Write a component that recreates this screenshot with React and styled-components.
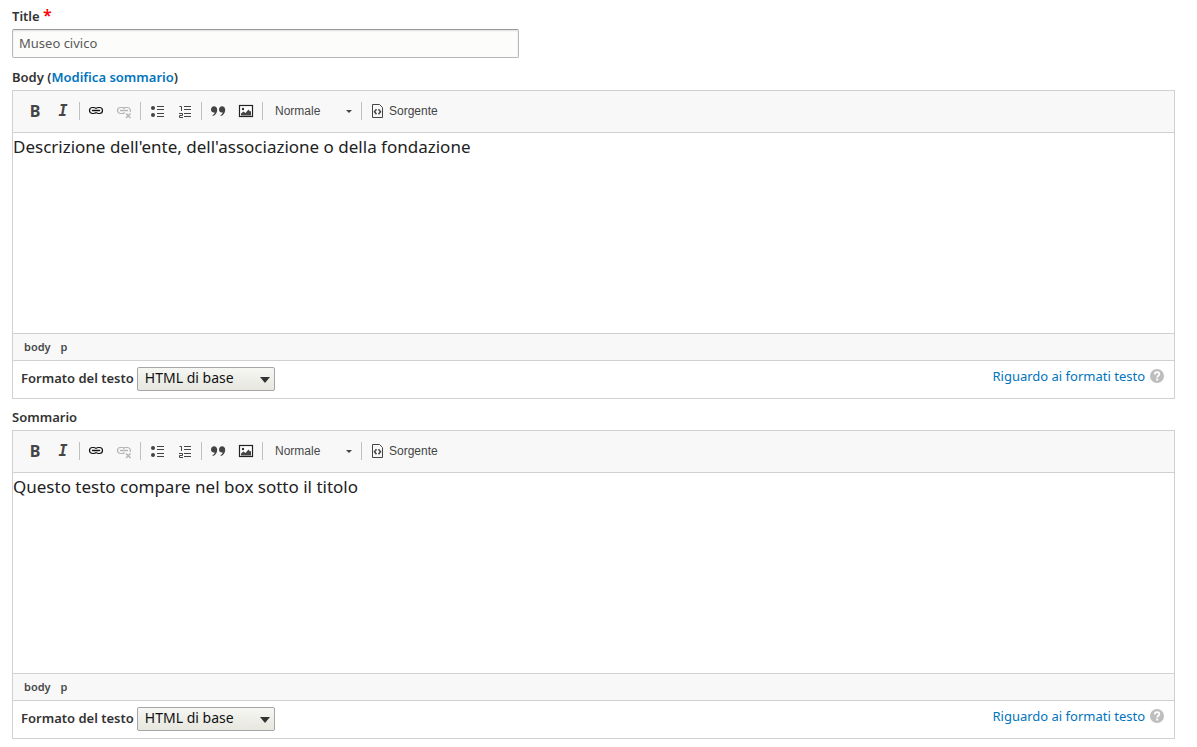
import React, { useState } from 'react'
import styled, { createGlobalStyle } from 'styled-components'


const GlobalStyle = createGlobalStyle`
  *, *::before, *::after {
    box-sizing: border-box;
  }

  body {
    margin: 0;
    background: #fff;
    color: #333;
    font-family: 'Noto Sans', 'Open Sans', sans-serif;
    font-size: 13px;
  }
`

const Icon = styled.svg.attrs({ 'aria-hidden': true, viewBox: '0 0 16 16' })`
  display: block;
  flex-shrink: 0;
  width: 16px;
  height: 16px;
  fill: none;
  stroke: ${props => props.$color || '#444'};
`

const BulletListIcon = () => (
  <Icon>
    <circle cx='4' cy='5' r='2' fill='#444' stroke='none' />
    <circle cx='4' cy='12' r='2' fill='#444' stroke='none' />
    <path d='M8 3.5h7M8 6.5h7M8 10.5h7M8 13.5h7' />
  </Icon>
)

const NumberedListIcon = () => (
  <Icon>
    <path d='M2.5 3.5h2V8' />
    <path d='M2 10.5h3.5v2h-3v2H6' />
    <path d='M7 3.5h7M7 6.5h7M7 10.5h7M7 13.5h7' />
  </Icon>
)

const LinkIcon = () => (
  <Icon $color='#111'>
    <rect x='1.5' y='4.5' width='7' height='6' rx='3' strokeWidth='1.2' />
    <rect x='7.5' y='4.5' width='7' height='6' rx='3' strokeWidth='1.2' />
    <path d='M5 7.5h6' stroke='#f8f8f8' strokeWidth='3.4' />
    <path d='M4.500 7.500h7' strokeWidth='1.400' strokeLinecap='round' />
  </Icon>
)

const UnlinkIcon = () => (
  <Icon $color='#b5b5b5'>
    <path d='M8.5 9.500c-.6.700-1.200 1-2 1h-2a3 3 0 0 1 0-6h2c.8 0 1.500.4 2 1' strokeWidth='1.2' />
    <path d='M7.500 5.500c.5-.6 1.200-1 2-1h2a3 3 0 0 1 2.500 4.500' strokeWidth='1.2' />
    <path d='M4.500 7.500h7' strokeWidth='1.400' strokeLinecap='round' />
    <path d='M10 10.500l4.500 4.500M14.500 10.500L10 15' strokeWidth='1.500' />
  </Icon>
)

const quoteMark = 'M4 3.3c1.9 0 3.2 1.4 3.2 3.6 0 3-1.8 5.2-4.3 6l-.5-.8c1.4-.7 2.2-1.6 2.3-2.7-.3.1-.6.1-.9.1C2.2 9.5 1 8.2 1 6.5S2.3 3.3 4 3.3z'

const QuoteIcon = () => (
  <Icon $color='none'>
    <path d={quoteMark} fill='#444' />
    <path d={quoteMark} fill='#444' transform='translate(8 0)' />
  </Icon>
)

const ImageIcon = () => (
  <Icon $color='#222'>
    <rect x='1.5' y='2.5' width='13' height='11' fill='#fff' strokeWidth='1.2' />
    <circle cx='5' cy='6' r='1.2' fill='#333' stroke='none' />
    <path d='M3 12.5v-2l2.5-2 2 1.5 3-3.5 1.5 2 1-.5v4.5z' fill='#444' stroke='none' />
  </Icon>
)

const SourceIcon = () => (
  <Icon>
    <path d='M3.5 1.5h7l3 3v10h-10z' />
    <path d='M7.5 6.2l-2 2.5 2 2.5M9.5 6.2l2 2.5-2 2.5' strokeWidth='1.5' />
  </Icon>
)

const HelpIcon = () => (
  <svg width='14' height='14' viewBox='0 0 14 14' aria-hidden='true'>
    <circle cx='7' cy='7' r='7' fill='#bebebe' />
    <path d='M4.8 5.4c0-1.4 1-2.2 2.3-2.2s2.2.8 2.2 1.9c0 1.6-2.1 1.6-2.1 3.3' fill='none' stroke='#fff' strokeWidth='1.8' />
    <rect x='6.2' y='9.5' width='2' height='2' fill='#fff' />
  </svg>
)

const ToolbarContainer = styled.div`
  display: flex;
  flex-direction: row;
  align-items: center;
  height: 42px;
  padding: 0 8px 2px;
  background: #f8f8f8;
  border-bottom: 1px solid #d1d1d1;
`

const ToolbarButton = styled.button`
  display: flex;
  align-items: center;
  justify-content: center;
  flex-shrink: 0;
  width: 28px;
  height: 28px;
  padding: 0;
  border: 0;
  background: transparent;
  color: #444;
  cursor: pointer;

  &:hover:enabled {
    background: #e5e5e5;
  }
`

const SourceButton = styled(ToolbarButton)`
  width: auto;
  gap: 4px;
  padding: 0 5px;
  font: 12px 'Liberation Sans', Arial, sans-serif;
`

const BoldGlyph = styled.span`
  font: bold 16px/16px 'Noto Sans', sans-serif;
`

const ItalicGlyph = styled.span`
  font: italic bold 15px/16px 'DejaVu Sans Mono', monospace;
`

const Separator = styled.span`
  flex-shrink: 0;
  width: 1px;
  height: 18px;
  margin: 0 2px;
  background: #c0c0c0;
`

const SelectWrapper = styled.span`
  position: relative;
  display: flex;
  width: ${props => props.$width}px;
`

const StyleSelect = styled.select`
  appearance: none;
  width: 100%;
  height: 28px;
  padding: 0 20px 0 10px;
  border: 0;
  background: transparent;
  color: #484848;
  font: 12px 'Liberation Sans', Arial, sans-serif;
`

const StyleArrow = styled.svg`
  position: absolute;
  top: 13px;
  right: 7px;
  pointer-events: none;
`

const Toolbar = () => (
  <ToolbarContainer role='toolbar'>
    <ToolbarButton type='button' aria-label='Grassetto'><BoldGlyph>B</BoldGlyph></ToolbarButton>
    <ToolbarButton type='button' aria-label='Corsivo'><ItalicGlyph>I</ItalicGlyph></ToolbarButton>
    <Separator />
    <ToolbarButton type='button' aria-label='Collegamento'><LinkIcon /></ToolbarButton>
    <ToolbarButton type='button' aria-label='Rimuovi collegamento' disabled><UnlinkIcon /></ToolbarButton>
    <Separator />
    <ToolbarButton type='button' aria-label='Elenco puntato'><BulletListIcon /></ToolbarButton>
    <ToolbarButton type='button' aria-label='Elenco numerato'><NumberedListIcon /></ToolbarButton>
    <Separator />
    <ToolbarButton type='button' aria-label='Citazione'><QuoteIcon /></ToolbarButton>
    <ToolbarButton type='button' aria-label='Immagine'><ImageIcon /></ToolbarButton>
    <Separator />
    <SelectWrapper $width={94}>
      <StyleSelect aria-label='Formato paragrafo'>
        <option>Normale</option>
      </StyleSelect>
      <StyleArrow width='6' height='3' viewBox='0 0 6 3' aria-hidden='true'>
        <path d='M0 0h6L3 3z' fill='#444' />
      </StyleArrow>
    </SelectWrapper>
    <Separator />
    <SourceButton type='button'><SourceIcon />Sorgente</SourceButton>
  </ToolbarContainer>
)

const EditorContainer = styled.div`
  border: 1px solid #d1d1d1;
`

const EditorContent = styled.textarea`
  display: block;
  width: 100%;
  height: 200px;
  padding: 1px 0;
  border: 0;
  outline: 0;
  resize: none;
  background: #fff;
  color: #222;
  font: 17px/26px 'Noto Sans', Tahoma, sans-serif;
`

const PathBar = styled.div`
  display: flex;
  align-items: center;
  gap: 10px;
  height: 28px;
  padding: 0 11px 2px;
  background: #f8f8f8;
  border-top: 1px solid #d1d1d1;
  border-bottom: 1px solid #d1d1d1;
`

const PathItem = styled.a`
  color: #484848;
  font-size: 11px;
  font-weight: 600;
  text-decoration: none;
`

const EditorFooter = styled.div`
  display: flex;
  align-items: center;
  height: 37px;
  padding: 0 10px 2px 8px;
`

const FormatLabel = styled.label`
  margin-right: 3px;
  padding-bottom: 2px;
  font-weight: 600;
`

const FormatSelect = styled.select`
  appearance: none;
  width: 100%;
  height: 24px;
  padding: 0 20px 2px 7px;
  border: 1px solid #a6a6a6;
  border-radius: 2px;
  background: linear-gradient(#f6f6f3, #e7e7df);
  color: #111;
  font: 14px 'Noto Sans', 'Open Sans', sans-serif;
`

const FormatArrow = styled.svg`
  position: absolute;
  top: 10px;
  right: 5px;
  pointer-events: none;
`

const HelpLink = styled.a`
  display: flex;
  align-items: center;
  gap: 5px;
  margin-left: auto;
  padding-bottom: 6px;
  color: #0074bd;
  text-decoration: none;
`

const Editor = ({ id, value }) => {
  const [text, setText] = useState(value)

  return (
    <EditorContainer>
      <Toolbar />
      <EditorContent id={id} value={text} spellCheck={false} onChange={e => setText(e.target.value)} />
      <PathBar>
        <PathItem href='#body'>body</PathItem>
        <PathItem href='#p'>p</PathItem>
      </PathBar>
      <EditorFooter>
        <FormatLabel htmlFor={`${id}-format`}>Formato del testo</FormatLabel>
        <SelectWrapper $width={138}>
          <FormatSelect id={`${id}-format`}>
            <option>HTML di base</option>
          </FormatSelect>
          <FormatArrow width='10' height='6' viewBox='0 0 10 6' aria-hidden='true'>
            <path d='M0 0h10L5 6z' fill='#333' />
          </FormatArrow>
        </SelectWrapper>
        <HelpLink href='#formati'>
          Riguardo ai formati testo
          <HelpIcon />
        </HelpLink>
      </EditorFooter>
    </EditorContainer>
  )
}

const Form = styled.form`
  display: flex;
  flex-direction: column;
  gap: 9px;
  padding: 7px 22px 8px 12px;
`

const Field = styled.div`
  display: flex;
  flex-direction: column;
  gap: 4px;
`

const Label = styled.label`
  line-height: 18px;
  font-weight: 600;
`

const Required = styled.span`
  color: #f00;
  font-size: 16px;
  line-height: 16px;
`

const Link = styled.a`
  color: #0074bd;
  text-decoration: none;
`

const TextInput = styled.input`
  width: 507px;
  max-width: 100%;
  height: 29px;
  margin: 0 0 1px;
  padding: 0 6px 2px;
  border: 1px solid #b8b8b8;
  border-top-color: #999;
  border-radius: 2px;
  background: #fcfcfa;
  box-shadow: inset 0 1px 2px rgba(0, 0, 0, 0.12);
  color: #595959;
  font: 13px 'Noto Sans', 'Open Sans', sans-serif;
`

const App = () => {
  const [title, setTitle] = useState('Museo civico')

  return (
    <Form onSubmit={e => e.preventDefault()}>
      <GlobalStyle />
      <Field>
        <Label htmlFor='title'>Title <Required>*</Required></Label>
        <TextInput id='title' value={title} onChange={e => setTitle(e.target.value)} />
      </Field>
      <Field>
        <Label htmlFor='body'>Body (<Link href='#sommario'>Modifica sommario</Link>)</Label>
        <Editor id='body' value="Descrizione dell'ente, dell'associazione o della fondazione" />
      </Field>
      <Field>
        <Label htmlFor='sommario'>Sommario</Label>
        <Editor id='sommario' value='Questo testo compare nel box sotto il titolo' />
      </Field>
    </Form>
  )
}

export default App
